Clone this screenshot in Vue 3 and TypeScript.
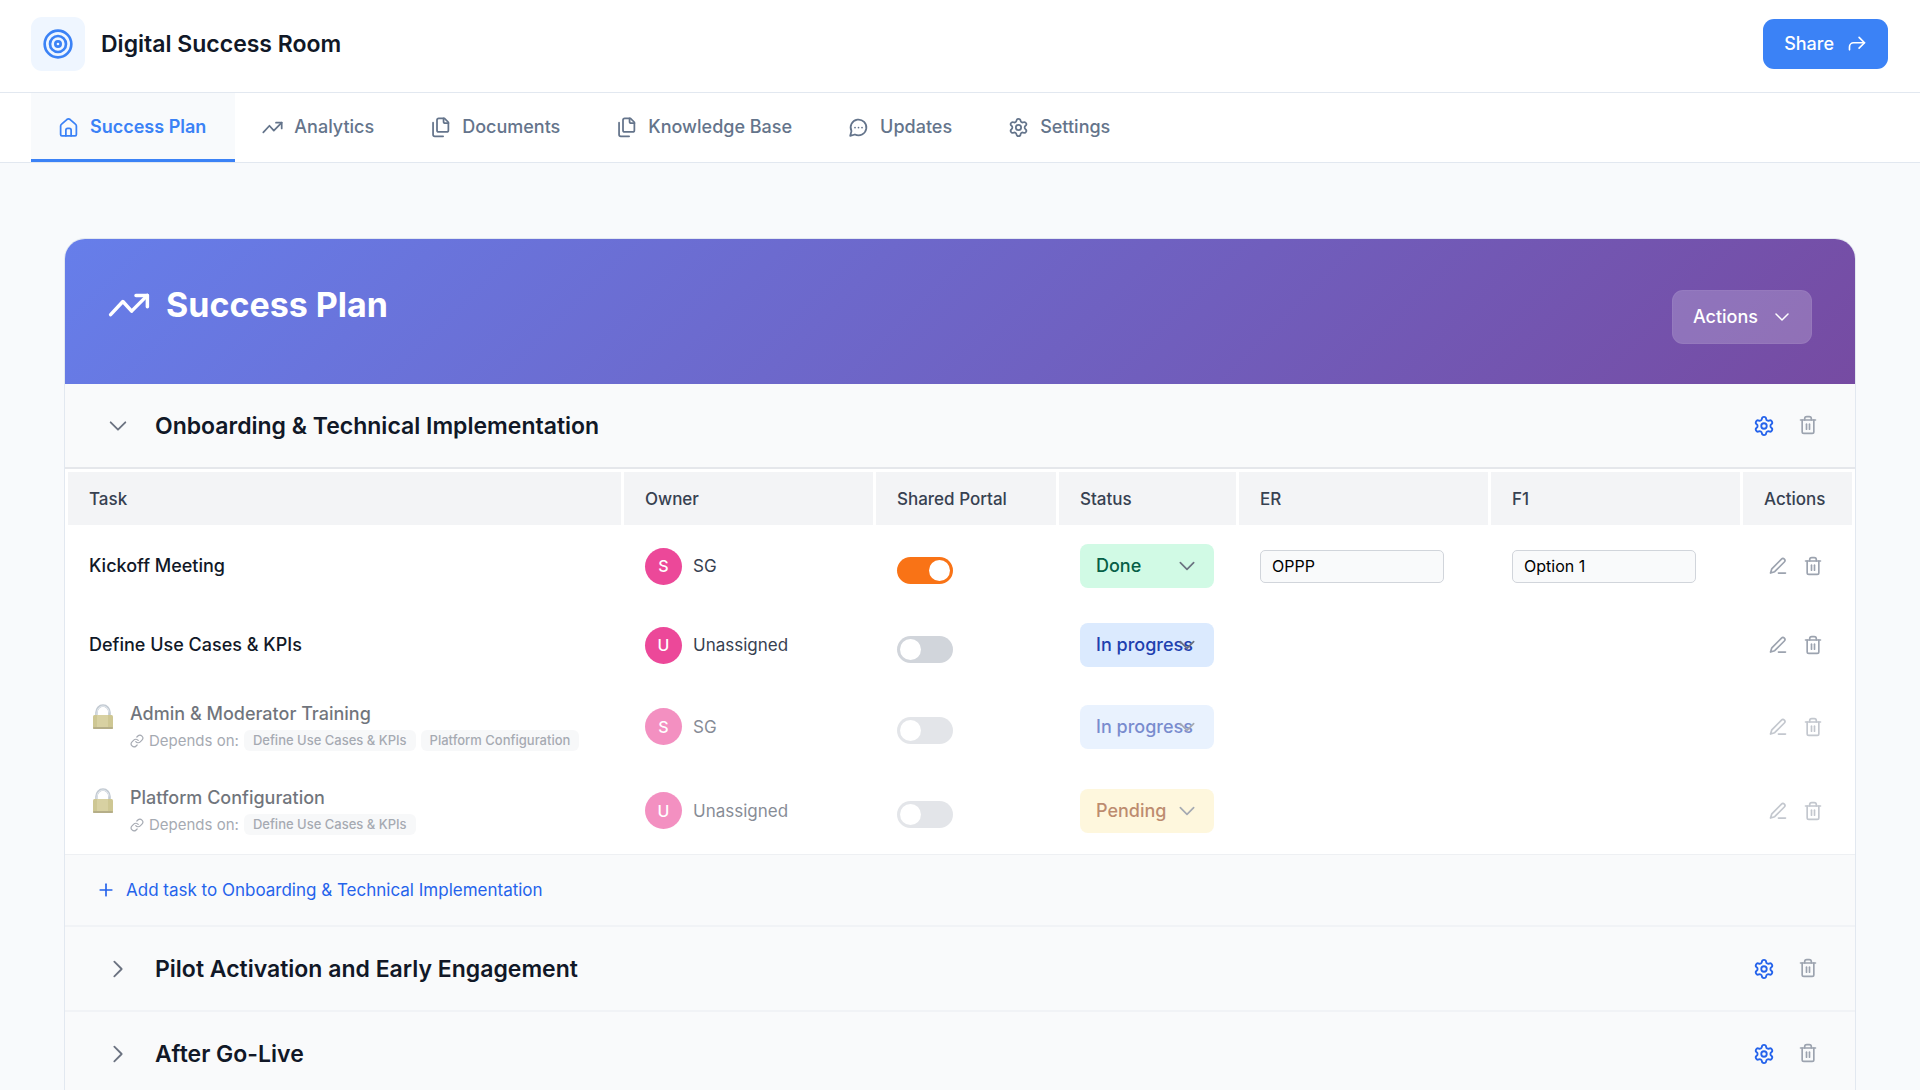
<script setup lang="ts">
import { h, ref, type FunctionalComponent } from 'vue'

type Status = 'Done' | 'In progress' | 'Pending'

interface Task {
  id: number
  name: string
  owner: string
  shared: boolean
  status: Status
  er?: string
  f1?: string
  locked?: boolean
  dependsOn?: string[]
}

const iconPaths: Record<string, string[]> = {
  target: [
    'M22 12a10 10 0 1 1-20 0a10 10 0 1 1 20 0z',
    'M18 12a6 6 0 1 1-12 0a6 6 0 1 1 12 0z',
    'M14 12a2 2 0 1 1-4 0a2 2 0 1 1 4 0z',
  ],
  home: [
    'M3 10.4a3 3 0 0 1 1.1-2.3l6-5.2a3 3 0 0 1 3.8 0l6 5.2A3 3 0 0 1 21 10.4V20a1.500 1.500 0 0 1-1.500 1.500h-15A1.500 1.500 0 0 1 3 20z',
    'M9 21.500v-6.500a2 2 0 0 1 2-2h2a2 2 0 0 1 2 2v6.500',
  ],
  trend: ['M1.500 17.500l7-7.500 5 5.500 9-9', 'M16 6.500h6.500V13'],
  files: [
    'M10 1.500h6.500L21 6v9a2 2 0 0 1-2 2h-9a2 2 0 0 1-2-2V3.500a2 2 0 0 1 2-2z',
    'M15.500 1.500V5a2 2 0 0 0 2 2H21',
    'M3.500 6.500V20a2 2 0 0 0 2 2H15',
  ],
  chat: [
    'M7.9 20A9 9 0 1 0 4 16.100L2.500 21.500z',
    'M8 12h.01',
    'M12 12h.01',
    'M16 12h.01',
  ],
  gear: [
    'M9.671 4.136a2.34 2.34 0 0 1 4.659 0 2.34 2.34 0 0 0 3.319 1.915 2.34 2.34 0 0 1 2.33 4.033 2.34 2.34 0 0 0 0 3.831 2.34 2.34 0 0 1-2.33 4.033 2.34 2.34 0 0 0-3.319 1.915 2.34 2.34 0 0 1-4.659 0 2.34 2.34 0 0 0-3.32-1.915 2.34 2.34 0 0 1-2.33-4.033 2.34 2.34 0 0 0 0-3.831A2.34 2.34 0 0 1 6.35 6.051a2.34 2.34 0 0 0 3.319-1.915',
    'M15 12a3 3 0 1 1-6 0a3 3 0 1 1 6 0z',
  ],
  share: ['M3 19v-3.500a5 5 0 0 1 5-5h13', 'M14.500 4l6.500 6.500-6.500 6.500'],
  down: ['M4 8l8 8 8-8'],
  right: ['M8 4l8 8-8 8'],
  plus: ['M12 5v14', 'M5 12h14'],
  trash: [
    'M3 6h18',
    'M5 6v14a2 2 0 0 0 2 2h10a2 2 0 0 0 2-2V6',
    'M8 6V4.500A2.500 2.500 0 0 1 10.500 2h3A2.500 2.500 0 0 1 16 4.500V6',
    'M10.200 11v6',
    'M13.800 11v6',
  ],
  pencil: [
    'M16.200 3.800a2.400 2.400 0 0 1 3.400 3.400L8 18.800l-5 1.700 1.600-5.100z',
    'M12.500 20.500H21',
  ],
  link: [
    'M10 13a5 5 0 0 0 7.540.54l3-3a5 5 0 0 0-7.070-7.070l-1.720 1.710',
    'M14 11a5 5 0 0 0-7.540-.54l-3 3a5 5 0 0 0 7.070 7.070l1.710-1.710',
  ],
}

const Icon: FunctionalComponent<{ name: string; size?: number }> = (props) =>
  h(
    'svg',
    {
      viewBox: '0 0 24 24',
      width: props.size ?? 21,
      height: props.size ?? 21,
      fill: 'none',
      stroke: 'currentColor',
      'stroke-width': 2,
      'stroke-linecap': 'round',
      'stroke-linejoin': 'round',
      'aria-hidden': 'true',
    },
    iconPaths[props.name].map((d) => h('path', { d })),
  )
Icon.props = ['name', 'size']

const tabs = [
  { label: 'Success Plan', icon: 'home' },
  { label: 'Analytics', icon: 'trend' },
  { label: 'Documents', icon: 'files' },
  { label: 'Knowledge Base', icon: 'files' },
  { label: 'Updates', icon: 'chat' },
  { label: 'Settings', icon: 'gear' },
]
const activeTab = ref('Success Plan')

const statuses: Status[] = ['Done', 'In progress', 'Pending']
const statusClass: Record<Status, string> = {
  Done: 'done',
  'In progress': 'progress',
  Pending: 'pending',
}

const tasks = ref<Task[]>([
  { id: 1, name: 'Kickoff Meeting', owner: 'SG', shared: true, status: 'Done', er: 'OPPP', f1: 'Option 1' },
  { id: 2, name: 'Define Use Cases & KPIs', owner: 'Unassigned', shared: false, status: 'In progress' },
  {
    id: 3,
    name: 'Admin & Moderator Training',
    owner: 'SG',
    shared: false,
    status: 'In progress',
    locked: true,
    dependsOn: ['Define Use Cases & KPIs', 'Platform Configuration'],
  },
  {
    id: 4,
    name: 'Platform Configuration',
    owner: 'Unassigned',
    shared: false,
    status: 'Pending',
    locked: true,
    dependsOn: ['Define Use Cases & KPIs'],
  },
])

const phases = ref([
  { name: 'Onboarding & Technical Implementation', open: true, tasks: tasks.value },
  { name: 'Pilot Activation and Early Engagement', open: false, tasks: [] as Task[] },
  { name: 'After Go-Live', open: false, tasks: [] as Task[] },
])
</script>

<template>
  <div class="page">
    <header class="topbar">
      <div class="brand">
        <span class="logo"><Icon name="target" :size="32" /></span>
        <h1>Digital Success Room</h1>
      </div>
      <button class="share" type="button">Share <Icon name="share" :size="20" /></button>
    </header>

    <nav class="tabs">
      <a
        v-for="tab in tabs"
        :key="tab.label"
        href="#"
        :class="['tab', { active: tab.label === activeTab }]"
        @click.prevent="activeTab = tab.label"
      >
        <Icon :name="tab.icon" />{{ tab.label }}
      </a>
    </nav>

    <main>
      <section class="card">
        <div class="hero">
          <h2><Icon name="trend" :size="42" />Success Plan</h2>
          <button class="hero-actions" type="button">Actions <Icon name="down" :size="18" /></button>
        </div>

        <div v-for="phase in phases" :key="phase.name" class="phase">
          <div class="phase-head">
            <button
              class="icon-btn fold"
              type="button"
              :aria-label="`Toggle ${phase.name}`"
              @click="phase.open = !phase.open"
            >
              <Icon :name="phase.open ? 'down' : 'right'" :size="22" />
            </button>
            <h3>{{ phase.name }}</h3>
            <div class="phase-tools">
              <button class="icon-btn blue" type="button" aria-label="Phase settings">
                <Icon name="gear" :size="22" />
              </button>
              <button class="icon-btn" type="button" aria-label="Delete phase"><Icon name="trash" :size="20" /></button>
            </div>
          </div>

          <template v-if="phase.open">
            <table>
              <colgroup>
                <col />
                <col class="c-wide" />
                <col class="c-shared" />
                <col class="c-status" />
                <col class="c-wide" />
                <col class="c-wide" />
                <col class="c-actions" />
              </colgroup>
              <thead>
                <tr>
                  <th>Task</th>
                  <th>Owner</th>
                  <th>Shared Portal</th>
                  <th>Status</th>
                  <th>ER</th>
                  <th>F1</th>
                  <th>Actions</th>
                </tr>
              </thead>
              <tbody>
                <tr v-for="task in phase.tasks" :key="task.id" :class="{ locked: task.locked }">
                  <td>
                    <div class="task">
                      <svg v-if="task.locked" class="lock" viewBox="0 0 24 28" width="24" height="28" aria-hidden="true">
                        <path d="M5.500 14V10.500a6.500 7 0 0 1 13 0V14" fill="none" stroke="#9aa7b5" stroke-width="2.600" />
                        <path d="M6 14V10.500a6 6.500 0 0 1 12 0" fill="none" stroke="#d3dbe3" stroke-width="1" />
                        <rect x="2" y="13" width="20" height="14" rx="1.500" fill="#afa24c" />
                        <rect x="6" y="13" width="11" height="14" fill="#bfb466" />
                        <rect x="2" y="25" width="20" height="2" rx="1" fill="#857a3a" />
                      </svg>
                      <div>
                        <div class="task-name">{{ task.name }}</div>
                        <div v-if="task.dependsOn" class="deps">
                          <Icon name="link" :size="14" />
                          <span class="deps-label">Depends on:</span>
                          <span v-for="dep in task.dependsOn" :key="dep" class="dep">{{ dep }}</span>
                        </div>
                      </div>
                    </div>
                  </td>
                  <td>
                    <div class="owner">
                      <span class="avatar">{{ task.owner[0] }}</span>{{ task.owner }}
                    </div>
                  </td>
                  <td class="toggle-cell">
                    <input
                      v-model="task.shared"
                      class="toggle"
                      type="checkbox"
                      :disabled="task.locked"
                      :aria-label="`Share ${task.name}`"
                    />
                  </td>
                  <td>
                    <div class="status">
                      <select v-model="task.status" :class="statusClass[task.status]" :aria-label="`Status of ${task.name}`">
                        <option v-for="s in statuses" :key="s">{{ s }}</option>
                      </select>
                      <Icon name="down" :size="20" />
                    </div>
                  </td>
                  <td><input v-if="task.er" v-model="task.er" class="field" type="text" aria-label="ER" /></td>
                  <td><input v-if="task.f1" v-model="task.f1" class="field" type="text" aria-label="F1" /></td>
                  <td>
                    <div class="row-tools">
                      <button class="icon-btn" type="button" aria-label="Edit task"><Icon name="pencil" :size="20" /></button>
                      <button class="icon-btn" type="button" aria-label="Delete task"><Icon name="trash" :size="20" /></button>
                    </div>
                  </td>
                </tr>
              </tbody>
            </table>
            <div class="add-row">
              <button class="add" type="button"><Icon name="plus" :size="20" />Add task to {{ phase.name }}</button>
            </div>
          </template>
        </div>
      </section>
    </main>
  </div>
</template>

<style>
body {
  background: #f8fafc;
}
</style>

<style scoped>
.page {
  font-family: Inter, 'Liberation Sans', sans-serif;
  font-size: 17px;
  line-height: 24px;
  color: #111827;
}
.page * {
  box-sizing: border-box;
}
svg {
  display: block;
  flex: none;
}
h1,
h2,
h3 {
  margin: 0;
  font-weight: 600;
}
button,
input,
select {
  font: inherit;
  margin: 0;
}
button {
  border: 0;
  background: none;
  cursor: pointer;
}

.topbar {
  display: flex;
  align-items: center;
  justify-content: space-between;
  padding: 17px 32px 21px 31px;
  background: #fff;
  border-bottom: 1px solid #e2e8f0;
}
.brand {
  display: flex;
  align-items: center;
  gap: 16px;
}
.logo {
  display: flex;
  padding: 11px;
  border-radius: 11px;
  background: #eff6ff;
  color: #3b82f6;
}
h1 {
  font-size: 23px;
  line-height: 32px;
}
.share,
.hero-actions {
  display: flex;
  align-items: center;
  color: #fff;
  font-size: 18px;
  font-weight: 500;
  border-radius: 11px;
}
.share {
  gap: 13px;
  padding: 13px 21px;
  background: #3b82f6;
}

.tabs {
  display: flex;
  padding: 0 31px;
  background: #fff;
  border-bottom: 1px solid #e2e8f0;
}
.tab {
  display: flex;
  align-items: center;
  gap: 11px;
  padding: 22px 29px 20px 27px;
  border-bottom: 3px solid transparent;
  color: #64748b;
  font-size: 18px;
  font-weight: 500;
  text-decoration: none;
}
.tab.active {
  color: #3b82f6;
  border-color: #3b82f6;
  background: #f8fafc;
  font-weight: 600;
}

main {
  padding: 75px 64px;
}
.card {
  overflow: hidden;
  padding-bottom: 24px;
  border: 1px solid #e2e8f0;
  border-radius: 21px;
  background: #f9fafb;
}
.hero {
  display: flex;
  align-items: flex-start;
  justify-content: space-between;
  padding: 43px 43px 40px;
  background: linear-gradient(135deg, #667eea 0%, #764ba2 100%);
  color: #fff;
}
h2 {
  display: flex;
  align-items: center;
  gap: 16px;
  font-size: 34px;
  line-height: 46px;
  font-weight: 700;
}
.hero-actions {
  gap: 15px;
  margin-top: 8px;
  padding: 14px 20px;
  border: 1px solid rgba(255, 255, 255, 0.05);
  background: rgba(255, 255, 255, 0.2);
}

.phase-head {
  display: flex;
  align-items: center;
  height: 85px;
  padding: 0 33px 0 38px;
  border-bottom: 2px solid #e5e7eb;
  background: #f9fafb;
}
.phase + .phase .phase-head {
  border-color: #f1f3f6;
}
h3 {
  margin-left: 22px;
  font-size: 23px;
  line-height: 32px;
}
.phase-tools {
  display: flex;
  gap: 15px;
  margin-left: auto;
}
.icon-btn {
  display: flex;
  padding: 4px;
  color: #9ca3af;
}
.icon-btn.fold {
  color: #6b7280;
}
.icon-btn.blue {
  color: #2563eb;
}

table {
  width: 100%;
  table-layout: fixed;
  border-collapse: separate;
  border-spacing: 3px;
  background: #fff;
}
.c-wide {
  width: 249px;
}
.c-shared {
  width: 180px;
}
.c-status {
  width: 177px;
}
.c-actions {
  width: 109px;
}
th {
  height: 53px;
  padding: 0 21px;
  background: #f3f4f6;
  color: #374151;
  font-weight: 500;
  text-align: left;
}
td {
  padding: 16px 21px;
  vertical-align: middle;
}
.locked td {
  opacity: 0.6;
}
.task {
  display: flex;
  gap: 15px;
}
.lock {
  margin-left: 2px;
}
.task-name {
  font-size: 18px;
  font-weight: 500;
  white-space: nowrap;
}
.deps {
  display: flex;
  align-items: center;
  gap: 5px;
  margin-top: 4px;
  color: #6b7280;
  font-size: 15px;
  line-height: 21px;
  white-space: nowrap;
}
.dep {
  padding: 0 9px;
  border-radius: 6px;
  background: #f3f4f6;
  font-size: 13px;
  font-weight: 500;
}
.owner {
  display: flex;
  align-items: center;
  gap: 11px;
  color: #374151;
}
.avatar {
  display: flex;
  align-items: center;
  justify-content: center;
  width: 37px;
  height: 37px;
  border-radius: 50%;
  background: #ec4899;
  color: #fff;
  font-size: 16px;
  font-weight: 500;
}
.toggle-cell {
  padding-top: 24px;
}
.toggle {
  display: flex;
  appearance: none;
  width: 56px;
  height: 27px;
  padding: 3px;
  border-radius: 14px;
  background: #d1d5db;
}
.toggle::before {
  content: '';
  width: 21px;
  height: 21px;
  border-radius: 50%;
  background: #fff;
}
.toggle:checked {
  justify-content: flex-end;
  background: #f97316;
}
.status {
  position: relative;
  width: 134px;
}
.status svg {
  position: absolute;
  top: 12px;
  right: 17px;
  color: #6b7280;
  pointer-events: none;
}
select {
  display: block;
  appearance: none;
  width: 100%;
  height: 44px;
  padding: 0 8px 0 16px;
  border: 0;
  border-radius: 8px;
  font-size: 18px;
  font-weight: 500;
}
select.done {
  background: #d1fae5;
  color: #065f46;
}
select.progress {
  background: #dbeafe;
  color: #1e40af;
}
select.pending {
  background: #fef3c7;
  color: #92400e;
}
.field {
  display: block;
  width: 184px;
  height: 33px;
  padding: 0 11px;
  border: 1px solid #d1d5db;
  border-radius: 5px;
  background: #f9fafb;
  color: #000;
  font-size: 16px;
}
.row-tools {
  display: flex;
  gap: 7px;
}

.add-row {
  padding: 23px 27px;
  border-top: 1px solid #eef0f3;
  border-bottom: 2px solid #f1f3f6;
  background: #f9fafb;
}
.add {
  display: flex;
  align-items: center;
  gap: 10px;
  padding: 0 4px;
  color: #2563eb;
}
</style>
